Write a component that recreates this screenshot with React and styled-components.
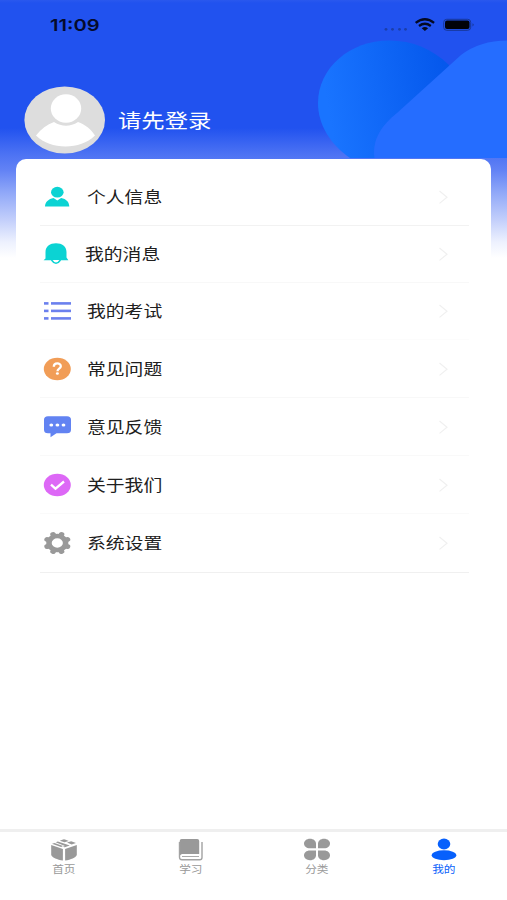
import React from 'react';
import styled, { createGlobalStyle } from 'styled-components';

const GlobalStyle = createGlobalStyle`
  * { box-sizing: border-box; }
  body {
    margin: 0;
    background: #fff;
    font-family: Roboto, "Noto Sans CJK SC", sans-serif;
  }
`;

const Screen = styled.div`
  position: relative;
  display: flex;
  flex-direction: column;
  width: 507px;
  height: 900px;
  overflow: hidden;
  background: linear-gradient(
    #2a58ee 0, #2152ef 3px, #2152ef 128px, #3561f1 140px, #4c72f3 154px,
    #6282f5 170px, #8fa7f8 192px, #c3cffb 220px, #edf1fe 242px, #fff 258px
  );
`;

const Backdrop = styled.svg`
  position: absolute;
  top: 0;
  left: 0;
`;

const StatusBar = styled.div`
  position: relative;
  display: flex;
  justify-content: space-between;
  height: 50px;
  padding: 15px 32px 0 50px;
`;

const Clock = styled.div`
  font: 600 16.5px/20px Inter, sans-serif;
  color: #050b2c;
  transform: scaleX(1.22);
  transform-origin: left;
`;

const Profile = styled.div`
  position: relative;
  display: flex;
  align-items: center;
  height: 108.5px;
  padding: 32px 0 0 24px;
`;

const LoginText = styled.div`
  margin-left: 11.5px;
  padding-top: 4px;
  font-size: 19.6px;
  line-height: 28px;
  color: #fff;
  transform: scaleX(1.19);
  transform-origin: left;
`;

const Card = styled.div`
  position: relative;
  flex: 1;
  margin: 0 16px;
  padding: 9.5px 22px 0 24px;
  border-radius: 10px 10px 0 0;
  background: #fff;
`;

const Row = styled.div`
  display: flex;
  align-items: center;
  height: ${(p) => p.$height}px;
  padding: 0 20px 0 2px;
  border-bottom: 1px solid ${(p) => p.$line};
`;

const RowIcon = styled.svg`
  flex: none;
  width: 30px;
  height: 28px;
  margin-left: ${(p) => p.$shift || 0}px;
`;

const RowLabel = styled.div`
  flex: 1;
  margin-left: 15px;
  padding-top: 2px;
  font-size: 15.8px;
  line-height: 24px;
  color: #202020;
  transform: scaleX(1.19);
  transform-origin: left;
`;

const TabBar = styled.div`
  position: relative;
  display: grid;
  grid-template-columns: repeat(4, 1fr);
  height: 71px;
  border-top: 3px solid #efefef;
  background: #fff;
`;

const Tab = styled.div`
  display: flex;
  flex-direction: column;
  align-items: center;
  padding-top: 5px;
  padding-left: ${(p) => p.$inset || 0}px;
  color: ${(p) => (p.$active ? '#0a62fb' : '#999')};
`;

const TabLabel = styled.div`
  margin-top: 2px;
  font-size: 9.8px;
  line-height: 13px;
  transform: scaleX(1.19);
`;

const rows = [
  {
    label: '个人信息', height: 58, line: '#f2f2f2',
    icon: (
      <g fill="#0bd3d3">
        <ellipse cx="15.3" cy="9.2" rx="6.3" ry="5.4" />
        <path d="M3 23.5c0-4.600 3.600-7.600 8.500-8.600l3.800 2.600 3.800-2.600c5.100 1 8.200 4 8.200 8.600z" />
      </g>
    ),
  },
  {
    label: '我的消息', height: 57, line: '#f8f8f8', shift: -2,
    icon: (
      <g>
        <path d="M5.500 18.500V12C5.500 6.500 10 3.200 16 3.200S26.500 6.500 26.500 12v5.500l1.900 2.700H3.600z" fill="#0bd3d3" />
        <path d="M11.500 20q4.500 6.600 9 0" fill="#fff" stroke="#0bd3d3" strokeWidth="1.500" />
      </g>
    ),
  },
  {
    label: '我的考试', height: 57, line: '#fcfcfc',
    icon: (
      <g fill="#6b80ee">
        {[5.1, 12.6, 20.1].map((y) => (
          <React.Fragment key={y}>
            <rect x="2" y={y} width="4.500" height="2.600" />
            <rect x="9" y={y} width="20" height="2.600" />
          </React.Fragment>
        ))}
      </g>
    ),
  },
  {
    label: '常见问题', height: 58, line: '#f8f8f8',
    icon: (
      <g>
        <ellipse cx="15.300" cy="14" rx="13.500" ry="11.300" fill="#f19d57" />
        <path d="M11.800 11.700c0-4.300 7-4.300 7-.5 0 2.600-3.300 2.300-3.300 5" fill="none" stroke="#fff" strokeWidth="2.300" />
        <ellipse cx="15.400" cy="18.500" rx="1.500" ry="1.200" fill="#fff" />
      </g>
    ),
  },
  {
    label: '意见反馈', height: 58, line: '#f9f9f9',
    icon: (
      <g>
        <path d="M6 3.200h19q4 0 4 3.500v10q0 3.500-4 3.500H14.500L8.500 24.300V20.200H6q-4 0-4-3.500v-10q0-3.500 4-3.500z" fill="#6283f2" />
        <g fill="#fff">
          <ellipse cx="9.300" cy="12" rx="1.900" ry="1.500" />
          <ellipse cx="15.400" cy="12" rx="1.900" ry="1.500" />
          <ellipse cx="21.500" cy="12" rx="1.900" ry="1.500" />
        </g>
      </g>
    ),
  },
  {
    label: '关于我们', height: 58, line: '#fafafa',
    icon: (
      <g>
        <ellipse cx="15.300" cy="14" rx="13.500" ry="11.300" fill="#dd68f6" />
        <path d="M9 13.700l4.500 4 8.500-7.200" fill="none" stroke="#fff" strokeWidth="2.300" />
      </g>
    ),
  },
  {
    label: '系统设置', height: 59, line: '#f0f0f0',
    icon: (
      <g fill="none" stroke="#999" transform="translate(15.300 14) scale(1.190 1)">
        <circle r="7" strokeWidth="4.600" />
        {[22.5, 67.5, 112.5, 157.5, 202.5, 247.5, 292.5, 337.5].map((a) => (
          <path key={a} d="M0-8.500v-.7" strokeWidth="4.800" strokeLinecap="round" transform={`rotate(${a})`} />
        ))}
      </g>
    ),
  },
];

const tabs = [
  {
    label: '首页', inset: 1.5,
    icon: (
      <g fill="#999">
        <path d="M1.200 8L12.900 12V23.500C7 22.700 2.500 20.700 1.200 18z" />
        <path d="M26.800 8L15.100 12V23.500C21 22.700 25.500 20.700 26.800 18z" />
        <path d="M12.300 2.700Q14 1.900 15.700 2.700L18.800 4l-4.300 1.300-4.700-1.600z" />
        <path d="M7.800 4.400l12 4-5.100 1.900L12.900 9.700 15 8.900 5.700 5.300z" />
        <path d="M17 5.600l4.200-1.400 4.800 1.900-4.400 1.500z" />
        <path d="M4.500 5.900l8.500 3.100-1.900.9L2 6.800z" />
      </g>
    ),
  },
  {
    label: '学习', inset: 1,
    icon: (
      <g>
        <path d="M2.700 21V4q0-2 2-2h15.500q2 0 2 2v13H5q-2.300.5-2.300 2.500z" fill="#999" />
        <path d="M25 5v15.500q0 2.300-2.300 2.300H5q-2.700 0-2.500-3V5" fill="none" stroke="#a2a2a2" strokeWidth="1.400" />
        <path d="M5 19.500h17" stroke="#aaa" strokeWidth="1" />
      </g>
    ),
  },
  {
    label: '分类',
    icon: (
      <g fill="#999">
        <path d="M13 11.300H7C3.200 11.300 1 9.100 1 6.500S3.400 1.700 7 1.700s6 2.200 6 5z" />
        <path d="M15 11.300h6c3.800 0 6-2.200 6-4.800s-2.400-4.800-6-4.800-6 2.200-6 5z" />
        <path d="M13 13.400H7c-3.800 0-6 2.200-6 4.900S3.400 23.200 7 23.200s6-2.200 6-5z" />
        <path d="M15 13.400h6c3.800 0 6 2.200 6 4.900s-2.400 4.900-6 4.900-6-2.200-6-5z" />
      </g>
    ),
  },
  {
    label: '我的',
    active: true,
    icon: (
      <g fill="#0760fc">
        <ellipse cx="14" cy="7" rx="6.300" ry="5.400" />
        <ellipse cx="14" cy="18.300" rx="12.300" ry="5" />
      </g>
    ),
  },
];

export default function App() {
  return (
    <>
      <GlobalStyle />
      <Screen>
        <Backdrop width="507" height="158" viewBox="0 0 507 158">
          <defs>
            <linearGradient id="leftBlob" gradientUnits="userSpaceOnUse" x1="325" y1="90" x2="445" y2="70">
              <stop offset="0" stopColor="#1974ff" />
              <stop offset="0.400" stopColor="#1169f8" />
              <stop offset="1" stopColor="#0558ec" />
            </linearGradient>
          </defs>
          <path d="M350 158C331 145 318 125 318 103C318 68 350 40.500 389 40.500C413 40.500 432 49 449 65L450 158z" fill="url(#leftBlob)" />
          <path d="M374.500 158C372 139 382 125 397 113L461 55Q480 40.500 507 40.500V158z" fill="#256dff" />
        </Backdrop>

        <StatusBar>
          <Clock>11:09</Clock>
          <svg width="92" height="20" viewBox="0 0 92 20">
            <g fill="#1b3eaa">
              <circle cx="3" cy="14.300" r="1.400" />
              <circle cx="9.500" cy="14.300" r="1.400" />
              <circle cx="16.500" cy="14.300" r="1.400" />
              <circle cx="22.500" cy="14.300" r="1.400" />
            </g>
            <g fill="none" stroke="#040922" strokeWidth="2.300">
              <path d="M32.700 7.800q9.200-7.200 18.400 0" />
              <path d="M36 11q5.900-4.400 11.800 0" />
            </g>
            <path d="M38.700 13.200q3.200-2.200 6.400 0l-3.200 2.700z" fill="#040922" />
            <rect x="60.700" y="4.300" width="27" height="11" rx="3" fill="none" stroke="#173697" />
            <rect x="62" y="5.500" width="24.500" height="8.600" rx="2" fill="#01020a" />
            <path d="M89.500 8.200q2.500 1.500 0 3.200z" fill="#173697" />
          </svg>
        </StatusBar>

        <Profile>
          <svg width="82" height="68" viewBox="0 0 82 68">
            <ellipse cx="40.700" cy="34" rx="40.300" ry="33.600" fill="#ddd" />
            <ellipse cx="42" cy="22.500" rx="15.200" ry="14.300" fill="#fff" />
            <path d="M12 49.500C17 43 23 38.500 30 36q12 7.500 24 0C61 38.500 67 43 71 49.500C63 57 53 60.500 41.500 60.500S20 57 12 49.500z" fill="#fff" />
          </svg>
          <LoginText>请先登录</LoginText>
        </Profile>

        <Card>
          {rows.map((row) => (
            <Row key={row.label} $height={row.height} $line={row.line}>
              <RowIcon viewBox="0 0 30 28" $shift={row.shift}>{row.icon}</RowIcon>
              <RowLabel>{row.label}</RowLabel>
              <svg width="12" height="16" viewBox="0 0 12 16">
                <path d="M2.500 2L10 8.200l-7.500 6.200" fill="none" stroke="#f0f0f0" strokeWidth="1.200" />
              </svg>
            </Row>
          ))}
        </Card>

        <TabBar>
          {tabs.map((tab) => (
            <Tab key={tab.label} $active={tab.active} $inset={tab.inset}>
              <svg width="28" height="24" viewBox="0 0 28 24">{tab.icon}</svg>
              <TabLabel>{tab.label}</TabLabel>
            </Tab>
          ))}
        </TabBar>
      </Screen>
    </>
  );
}
